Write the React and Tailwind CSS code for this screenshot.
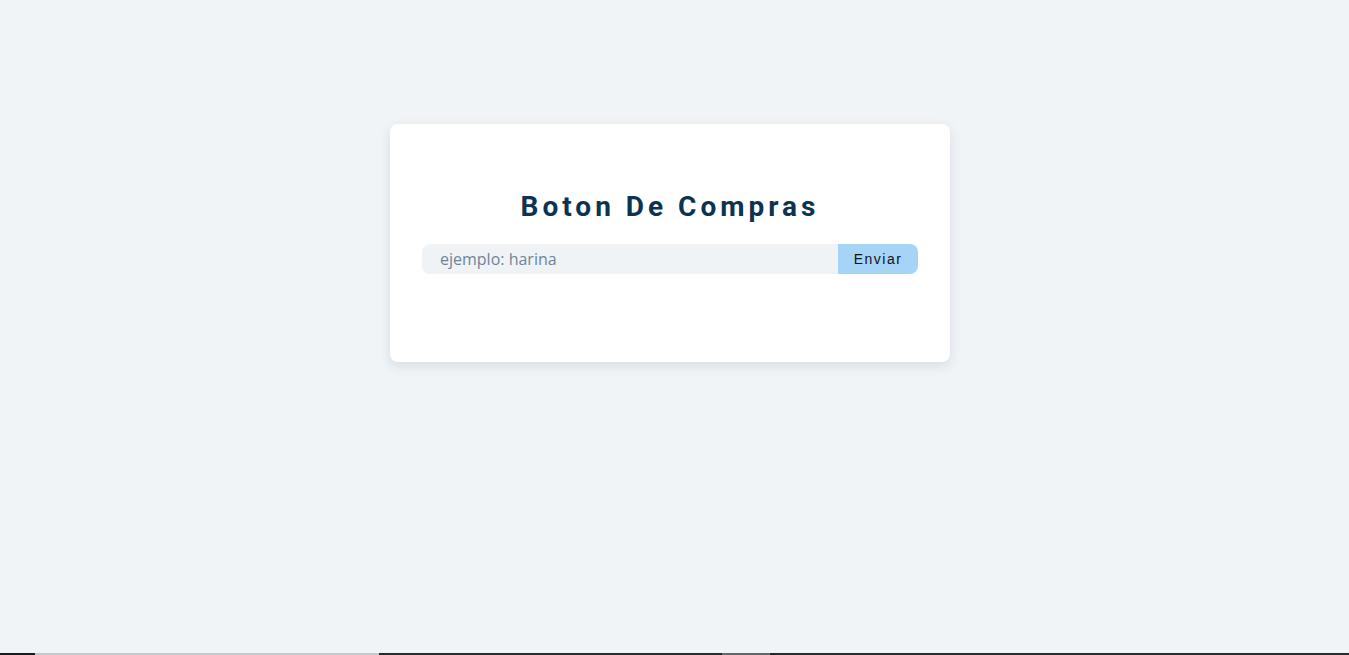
export default function App() {
  return (
    <div className="flex min-h-[655px] flex-col bg-[#f0f4f7]">
      <main className="flex flex-1 justify-center pr-[9px] pt-[124px]">
        <section className="h-[238px] w-[560px] rounded-lg bg-white px-8 pt-[63px] shadow-[0_4px_12px_rgba(30,60,90,0.12)]">
          <h1 className="text-center font-['Roboto',sans-serif] text-[28px] font-bold leading-[40px] tracking-[4px] text-[#0b3352]">
            Boton De Compras
          </h1>
          <form className="mt-[17px] flex h-[30px]" onSubmit={(e) => e.preventDefault()}>
            <input
              type="text"
              placeholder="ejemplo: harina"
              className="h-full flex-1 rounded-l-lg bg-[#eff3f6] pb-px pl-[18px] font-['Open_Sans',sans-serif] text-base text-[#333] outline-none placeholder:text-[#6f8396]"
            />
            <button
              type="submit"
              className="h-full w-20 rounded-r-lg bg-[#a6d4f7] font-['Liberation_Sans',Arial,sans-serif] text-sm tracking-[1.5px] text-[#111]"
            >
              Enviar
            </button>
          </form>
        </section>
      </main>
      <div className="flex h-[2px]">
        <div className="w-[35px] bg-[#1a1a1a]" />
        <div className="w-[344px] bg-[#c8c8c8]" />
        <div className="w-[343px] bg-[#2a2a2a]" />
        <div className="w-[48px] bg-[#666]" />
        <div className="flex-1 bg-[#2a2a2a]" />
      </div>
    </div>
  );
}
